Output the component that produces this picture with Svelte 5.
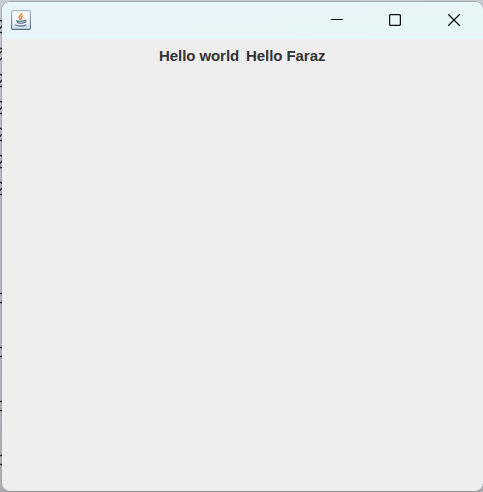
<script>
  const twos = [26, 80, 107, 134, 161, 188];
  const brackets = [298, 352, 406, 460];
</script>

<div class="desktop">
  <main class="window">
    <header>
      <svg class="java" width="20" height="20" viewBox="0 0 20 20" fill="none">
        <defs>
          <linearGradient id="face" x1="0" y1="0" x2="0" y2="1">
            <stop offset="0" stop-color="#fff" />
            <stop offset=".5" stop-color="#f3f5f7" />
            <stop offset="1" stop-color="#d4dfe8" />
          </linearGradient>
          <linearGradient id="edge" x1="0" y1="0" x2="0" y2="1">
            <stop offset="0" stop-color="#a6b8c6" />
            <stop offset="1" stop-color="#54718c" />
          </linearGradient>
        </defs>
        <rect x=".6" y=".6" width="18.8" height="18.8" rx="1.3" fill="url(#face)" stroke="url(#edge)" stroke-width="1.2" />
        <path d="M10.6 3c.8 2-3.2 2.8-2.4 4.8.3.8 1 1.2 1 2.3M12 5.7c-3 1.3-.5 2.4-1.8 4" stroke="#ef8e3e" stroke-width="1.7" />
        <path d="M5 10.5c2 .8 6 .8 8 0M6 11c.2 1.3.8 2 1.4 2.1h4.2c.8-.2 1.2-.8 1.4-1.5M13 10.6c3-.7 2.2 1.7-.4 2" stroke="#5b7c95" stroke-width="1.3" />
        <path d="M4 14.8c1.7 1.6 9 1.6 11.5.1" stroke="#6b8aa1" stroke-width="1.4" />
      </svg>
      <div class="controls">
        <button aria-label="Minimize">
          <svg width="12" height="12" viewBox="0 0 12 12"><path class="dash" d="M0 5.5h12" /></svg>
        </button>
        <button aria-label="Maximize">
          <svg width="12" height="12" viewBox="0 0 12 12"><rect x=".6" y=".6" width="10.8" height="10.8" rx="1" /></svg>
        </button>
        <button aria-label="Close">
          <svg width="12" height="12" viewBox="0 0 12 12"><path d="M.3.3l11.4 11.4M11.7.3L.3 11.7" /></svg>
        </button>
      </div>
    </header>
    <section>
      <span class="world">Hello world</span>
      <span class="name">Hello Faraz</span>
    </section>
  </main>
  <svg class="editor" width="2" height="492" viewBox="0 0 2 492" fill="none" stroke="#2a2c32" stroke-width="1.5">
    {#each twos as y}
      <path d="M0 {y - 5.5}h1l1 1M2 {y}L0 {y + 2.5}M0 {y + 6.5}h2" />
    {/each}
    <path d="M0 48.5h2M0 53l2-2M0 60l2-2" />
    {#each brackets as y}
      <path d="M0 {y - 4.5}h2M0 {y + 4.5}h2" />
    {/each}
  </svg>
</div>

<style>
  .desktop {
    box-sizing: border-box;
    position: relative;
    width: 483px;
    height: 492px;
    padding: 1px 0 0 1px;
    overflow: hidden;
    background: linear-gradient(#c9ccd2, #b2b5c0 35%, #b2b5be 70%, #a9abb0);
  }
  .editor {
    position: absolute;
    left: 0;
    top: 0;
  }
  .window {
    box-sizing: border-box;
    display: flex;
    flex-direction: column;
    width: 483px;
    height: 491px;
    border: 1px solid #a4a7ab;
    border-bottom-color: #929292;
    border-radius: 9px;
    overflow: hidden;
    background: #eee;
  }
  header {
    box-sizing: border-box;
    display: flex;
    justify-content: space-between;
    flex: 0 0 37px;
    padding-left: 9px;
    background: linear-gradient(175deg, #eaf4fb, #e6f6f6 80%);
  }
  .java {
    margin-top: 8px;
  }
  .controls {
    display: flex;
    height: 36px;
  }
  button {
    display: flex;
    align-items: center;
    justify-content: center;
    width: 58.5px;
    padding: 0;
    border: 0;
    background: none;
  }
  button svg {
    fill: none;
    stroke: #111217;
    stroke-width: 1.25;
  }
  .dash {
    stroke-width: 1;
    stroke: #000;
  }
  section {
    display: flex;
    padding: 8px 0 0 157px;
    color: #333;
    font: bold 15px/18px "Liberation Sans", Arial, sans-serif;
    letter-spacing: -0.07px;
    white-space: nowrap;
  }
  .name {
    margin-left: 7px;
  }
</style>
